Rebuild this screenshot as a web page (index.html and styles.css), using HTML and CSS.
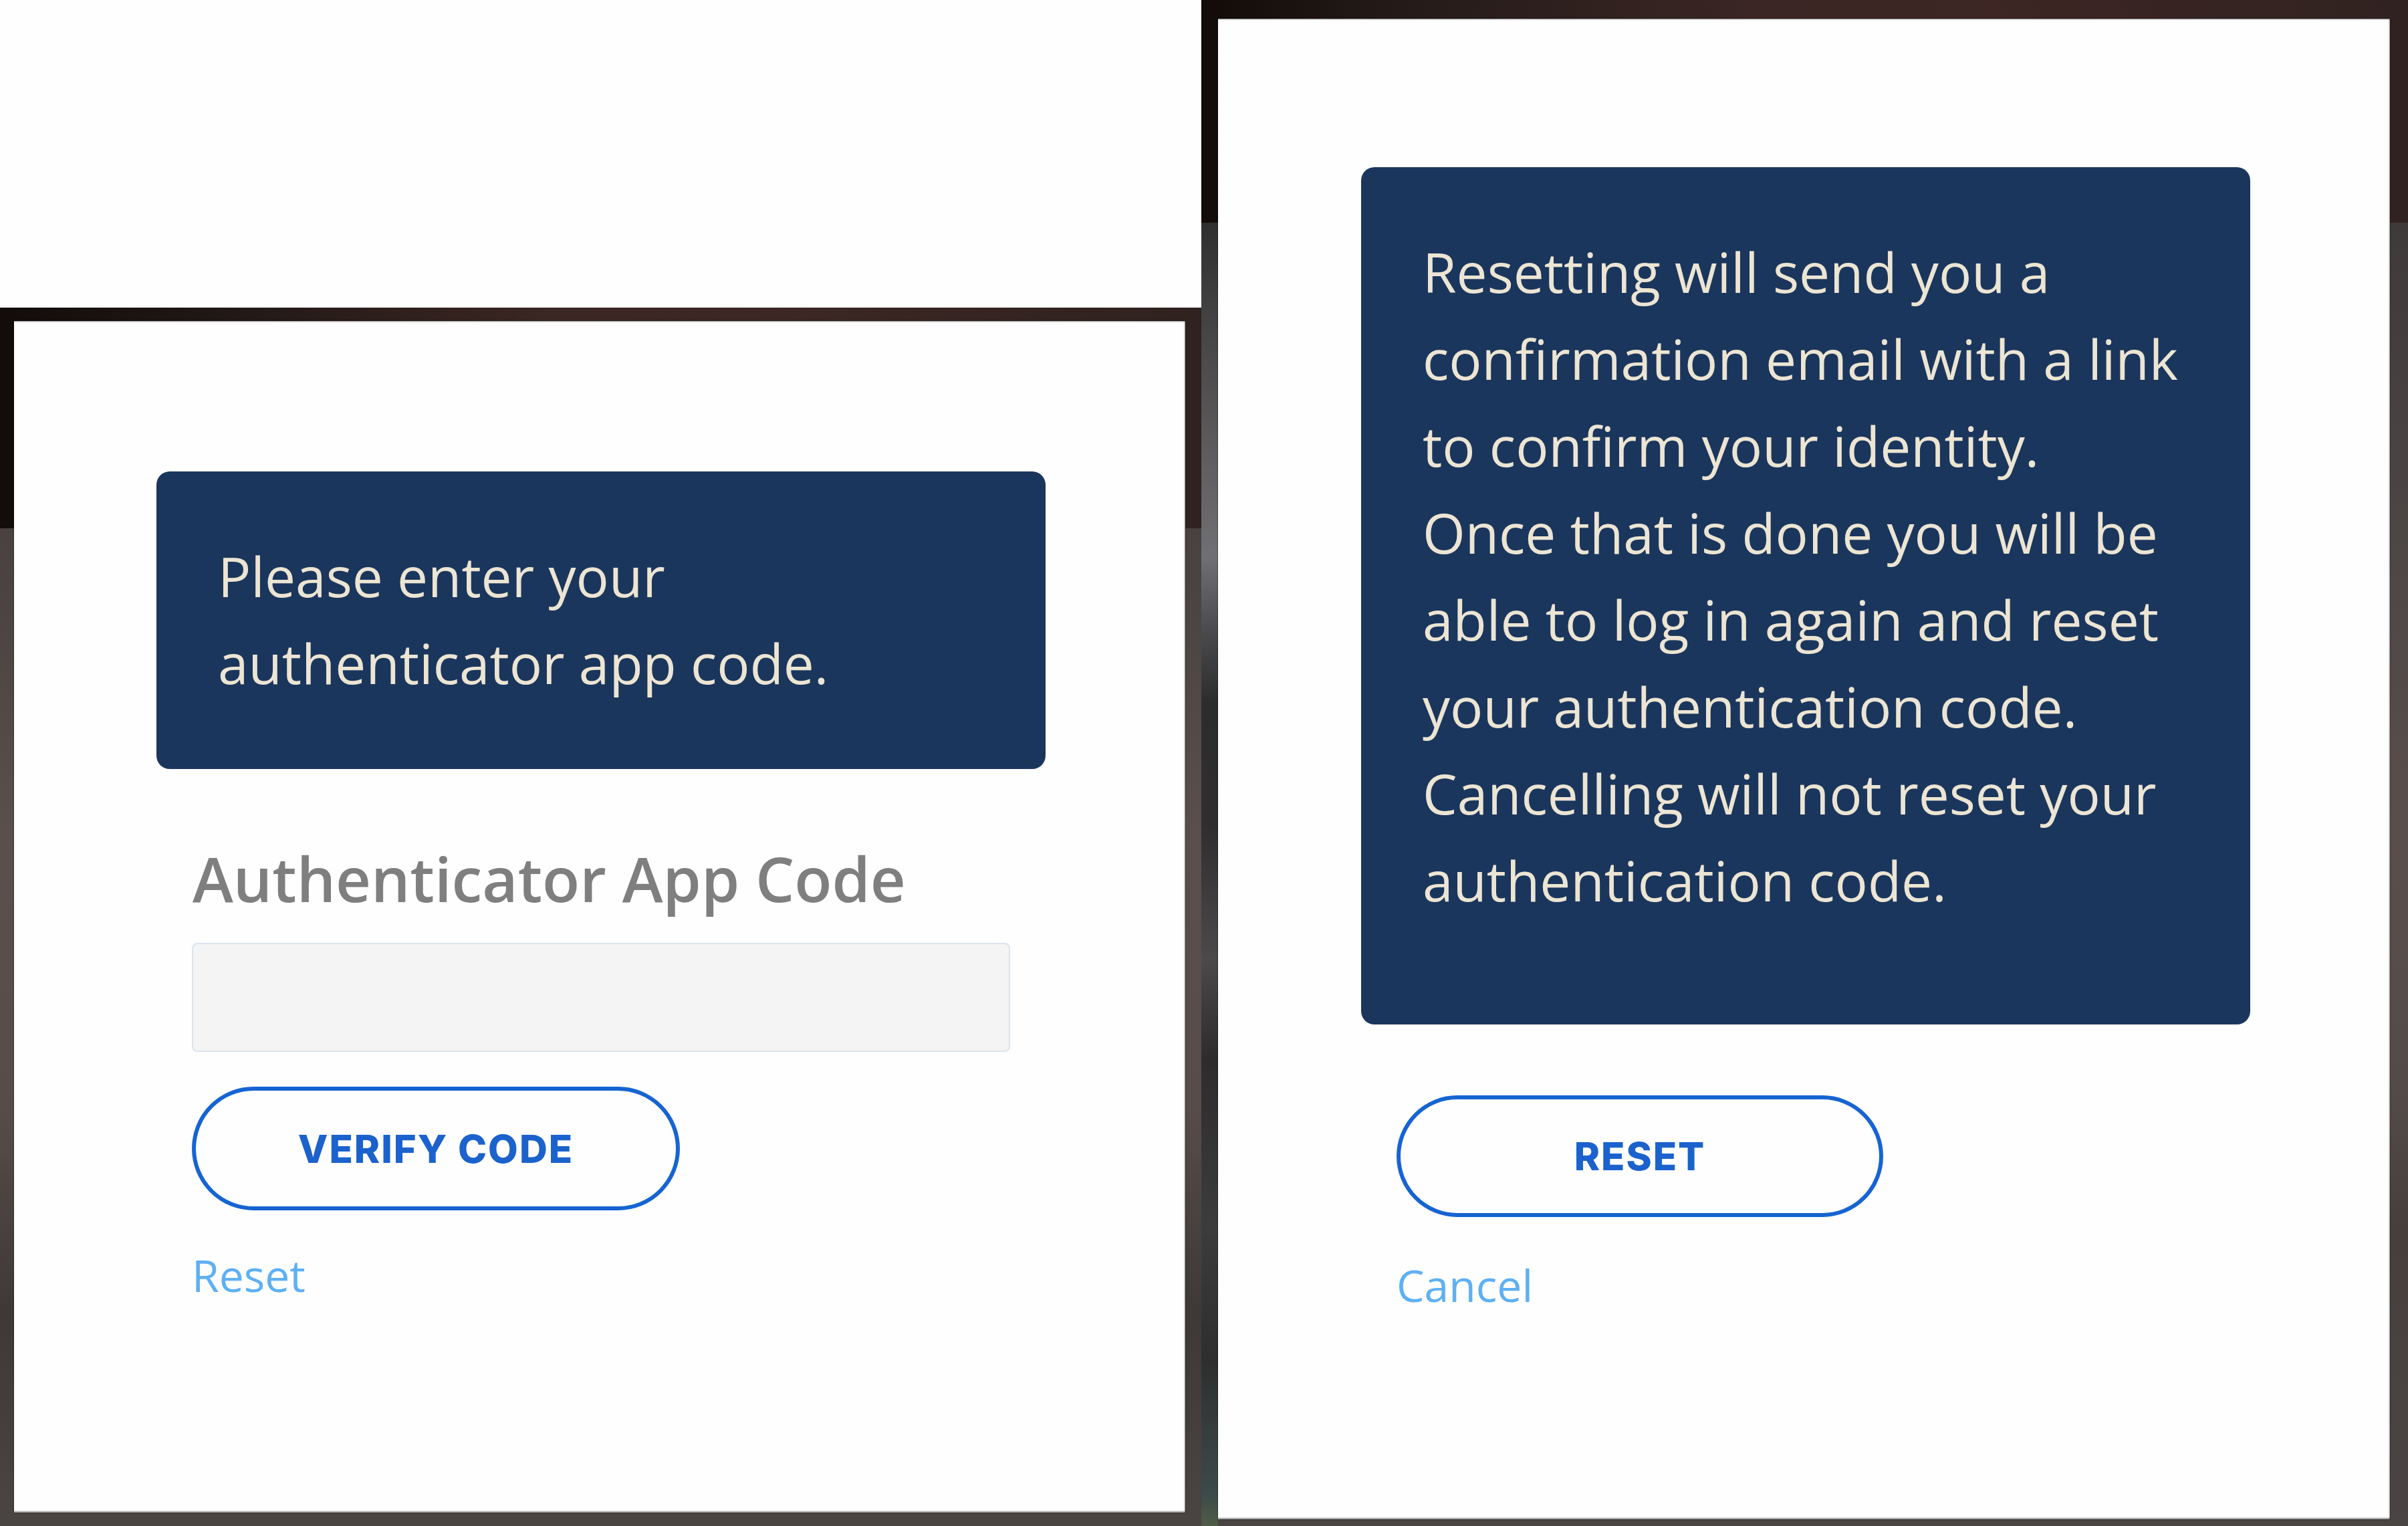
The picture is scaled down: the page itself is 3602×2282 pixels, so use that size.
FILE: index.html
```html
<!DOCTYPE html>
<html lang="en">
<head>
<meta charset="utf-8">
<title>Authenticator code</title>
<link rel="stylesheet" href="styles.css">
</head>
<body>
<div class="shot shot-left">
  <div class="page-top"></div>
  <div class="frame frame-left">
    <div class="card card-left">
      <div class="notice notice-short">Please enter your<br>authenticator app code.</div>
      <div class="form">
        <div class="label">Authenticator App Code</div>
        <div class="input"></div>
        <div class="btn">VERIFY CODE</div>
        <div class="link">Reset</div>
      </div>
    </div>
  </div>
</div>
<div class="shot shot-right">
  <div class="frame frame-right">
    <div class="card card-right">
      <div class="notice notice-long">Resetting will send you a<br>confirmation email with a link<br>to confirm your identity.<br>Once that is done you will be<br>able to log in again and reset<br>your authentication code.<br>Cancelling will not reset your<br>authentication code.</div>
      <div class="form">
        <div class="btn btn-reset">RESET</div>
        <div class="link link-cancel">Cancel</div>
      </div>
    </div>
  </div>
</div>
</body>
</html>
```
FILE: styles.css
```css
html, body {
  margin: 0;
  padding: 0;
}
body {
  width: 3602px;
  height: 2282px;
  display: flex;
  overflow: hidden;
  background: #3a3434;
  font-family: "Open Sans", "Noto Sans", sans-serif;
}
.shot {
  display: flex;
  flex-direction: column;
  height: 2282px;
  box-sizing: border-box;
}
.shot-left {
  width: 1797px;
}
.shot-right {
  width: 1805px;
}
.page-top {
  height: 460px;
  background: #fefefe;
  flex: none;
}
.frame {
  flex: 1;
  display: flex;
  box-sizing: border-box;
}
.frame-left {
  padding: 20px 24px 20px 21px;
  background:
    linear-gradient(90deg, #120c0a 0, #221916 20%, #3a2622 45%, #3c2724 65%, #2f221f 100%) top left / 100% 330px no-repeat,
    linear-gradient(180deg, #3f3a38 0, #4a4341 400px, #5a4f4c 800px, #574c49 1200px, #3e3937 1500px, #4a4442 1822px);
}
.frame-right {
  padding: 28px 27px 10px 25px;
  background:
    linear-gradient(90deg, #120b09 0, #231a17 15%, #3a2624 45%, #3d2624 65%, #302220 100%) top left / 100% 333px no-repeat;
  background-color: #4a4443;
  position: relative;
}
.frame-right::before {
  content: "";
  position: absolute;
  left: 0;
  top: 333px;
  bottom: 0;
  width: 25px;
  background: linear-gradient(180deg, #2f2f2f 0, #4a4a4a 200px, #707074 500px, #4e4e52 600px, #2c2c2c 720px, #2e2e2e 900px, #4a4a4a 1100px, #2c2c2c 1250px, #3c3c3c 1500px, #2e2e2e 1700px, #3c4a4a 1900px, #4e5c48 1949px);
}
.frame-right::after {
  content: "";
  position: absolute;
  right: 0;
  top: 333px;
  bottom: 0;
  width: 27px;
  background: linear-gradient(180deg, #3e3a39 0, #4a4544 400px, #5a4e4c 900px, #544b48 1300px, #463f3c 1500px, #4a4545 1949px);
}
.card {
  flex: 1;
  background: #fefefe;
  box-sizing: border-box;
  display: flex;
  flex-direction: column;
  position: relative;
  z-index: 1;
  box-shadow:
    inset 0 3px 2px -2px rgba(0,0,0,0.45),
    inset -3px 0 2px -2px rgba(0,0,0,0.45),
    inset 0 -4px 2px -2px rgba(0,0,0,0.4),
    0 0 2px rgba(0,0,0,0.7);
}
.card-left {
  padding: 225px 0 0 213px;
}
.card-right {
  padding: 222px 0 0 214px;
}
.notice {
  width: 1330px;
  box-sizing: border-box;
  background: #1b365d;
  border-radius: 20px;
  color: #ece5d3;
  font-size: 82px;
  line-height: 130px;
  padding: 91px 40px 94px 92px;
}
.notice-long {
  padding-bottom: 151px;
}
.form {
  width: 1330px;
  box-sizing: border-box;
  padding: 0 53px;
  display: flex;
  flex-direction: column;
  align-items: flex-start;
}
.label {
  margin-top: 100px;
  font-size: 92px;
  line-height: 128px;
  font-weight: 600;
  color: #7f7f7f;
  padding-left: 1px;
}
.input {
  margin-top: 32px;
  align-self: stretch;
  height: 163px;
  box-sizing: border-box;
  border: 2px solid #dce3ec;
  border-radius: 8px;
  background: #f4f4f4;
}
.btn {
  margin-top: 52px;
  width: 730px;
  height: 185px;
  box-sizing: border-box;
  border: 6px solid #1664d2;
  border-radius: 100px;
  display: flex;
  align-items: center;
  justify-content: center;
  font-family: Inter, "Open Sans", sans-serif;
  font-weight: 800;
  font-size: 58px;
  letter-spacing: 2px;
  color: #1b62cd;
}
.btn-reset {
  margin-top: 106px;
  width: 728px;
  height: 182px;
}
.link {
  margin-top: 49px;
  font-size: 66px;
  line-height: 95px;
  font-weight: 400;
  color: #5eb0f3;
}
.link-cancel {
  margin-top: 54px;
}
```
